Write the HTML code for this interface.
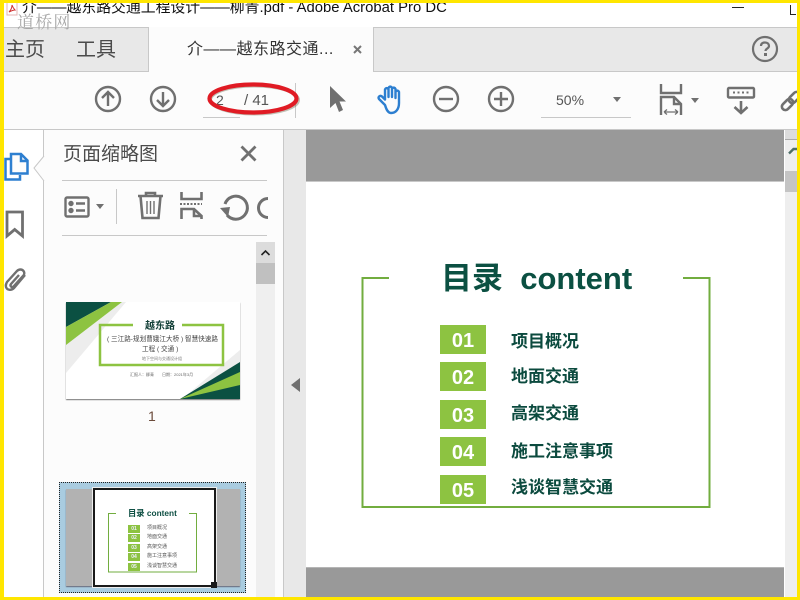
<!DOCTYPE html>
<html><head><meta charset="utf-8">
<style>
html,body{margin:0;padding:0;background:#fff}
#p{position:relative;width:800px;height:600px;overflow:hidden;background:#fff;font-family:"Liberation Sans","Noto Sans CJK SC",sans-serif}
#p div,#p span.a{position:absolute}
.t{white-space:nowrap;line-height:1}
.num{left:440px;width:46px;height:29px;background:#8dc341;color:#fff;font:bold 20px/32px "Liberation Sans",sans-serif;text-align:center}
.lbl{left:511px;color:#0b4a3e;font:bold 17px/20px "Liberation Sans","Noto Sans CJK SC",sans-serif;white-space:nowrap}
.sq{left:128px;width:12px;height:8px;background:#8dc341;color:#eef;font:bold 5px/8px "Liberation Sans",sans-serif;text-align:center}
svg{position:absolute;overflow:visible}
</style></head><body><div id="p">

<!-- title bar -->
<div style="left:0;top:27px;width:800px;height:1px;background:#c8c8c8"></div>
<div style="left:0;top:28px;width:800px;height:43px;background:#e8e8e8"></div>
<div style="left:0;top:71px;width:800px;height:1px;background:#c8c8c8"></div>
<div style="left:148px;top:27px;width:226px;height:45px;background:#fcfcfc;border-left:1px solid #c8c8c8;border-right:1px solid #c8c8c8;box-sizing:border-box"></div>
<div style="left:0;top:72px;width:800px;height:57px;background:#fcfcfc"></div>
<div style="left:0;top:129px;width:800px;height:1px;background:#c8c8c8"></div>

<svg style="left:6px;top:2px" width="12" height="14"><path d="M1 0V13H11V0" fill="#fff" stroke="#e3b4b4"/><path d="M3 10C5 8 6 5 6 3C7 6 8 7 9 8C7 8 5 9 3 10Z" fill="none" stroke="#d03030"/></svg>
<div class="t" style="left:22px;top:1px;font-size:14.850px;color:#111">介——越东路交通工程设计——柳青.pdf - Adobe Acrobat Pro DC</div>
<div class="t" style="left:17px;top:12px;font:17px/1 'Noto Serif CJK SC',serif;letter-spacing:1.200px;color:#a8a8a8">道桥网</div>
<div style="left:732px;top:7px;width:12px;height:1px;background:#222"></div>
<div style="left:790px;top:5px;width:1px;height:9px;background:#222"></div>
<div style="left:790px;top:14px;width:6px;height:1px;background:#222"></div>

<!-- tabs -->
<div class="t" style="left:5px;top:40px;font-size:20px;color:#4b4b4b">主页</div>
<div class="t" style="left:76px;top:40px;font-size:20px;color:#4b4b4b">工具</div>
<div class="t" style="left:187px;top:42px;font-size:16px;letter-spacing:.5px;color:#333">介——越东路交通...</div>
<svg style="left:352px;top:44px" width="11" height="11"><path d="M2 2L9 9M9 2L2 9" stroke="#777" stroke-width="2"/></svg>
<svg style="left:751px;top:35px" width="28" height="28"><circle cx="14" cy="14" r="12" fill="none" stroke="#707070" stroke-width="2.200"/><path d="M10 11C10 8 12 7.500 14 7.500C16.500 7.500 18 9 18 11C18 13.500 14.500 13.500 14.500 16" fill="none" stroke="#707070" stroke-width="2.200"/><rect x="13" y="18" width="3" height="3" fill="#707070"/></svg>

<!-- toolbar icons -->
<svg style="left:94px;top:85px" width="28" height="28" fill="none" stroke="#707070" stroke-width="2.400"><circle cx="14" cy="14" r="12"/><path d="M14 21V7M8 13L14 7L20 13"/></svg>
<svg style="left:149px;top:85px" width="28" height="28" fill="none" stroke="#707070" stroke-width="2.400"><circle cx="14" cy="14" r="12"/><path d="M14 7V21M8 15L14 21L20 15"/></svg>
<div class="t" style="left:216px;top:93px;font-size:14px;color:#555">2</div>
<div class="t" style="left:244px;top:93px;font-size:15px;color:#555">/ 41</div>
<div style="left:203px;top:117px;width:37px;height:1px;background:#c8c8c8"></div>
<div style="left:295px;top:83px;width:1px;height:35px;background:#c8c8c8"></div>
<svg style="left:205px;top:80px" width="100" height="36"><ellipse cx="49.500" cy="20" rx="44" ry="14" fill="none" stroke="#6a6a4a" stroke-width="3" opacity=".4"/><ellipse cx="48" cy="18.500" rx="43.500" ry="14" fill="none" stroke="#e01b24" stroke-width="4.200"/></svg>

<svg style="left:328px;top:85px" width="20" height="29"><path d="M2 1V23L7.500 18L11 27L15 25L11.500 16.500H18Z" fill="#707070"/></svg>
<svg style="left:376px;top:85px" width="30" height="30" fill="none" stroke="#2d7fd0" stroke-width="2.400" stroke-linejoin="round"><path d="M9 20L3 14C1.500 12 4 10 6 11.500L9 14.500V5C9 2.500 12.500 2.500 12.500 5V12V3.500C12.500 1 16 1 16 3.500V12V4.500C16 2 19.500 2 19.500 4.500V13V7.500C19.500 5 23 5 23 7.500V18C23 24 20 28 15 28C12 28 10.500 25 9 20Z"/></svg>
<svg style="left:432px;top:85px" width="28" height="28" fill="none" stroke="#707070" stroke-width="2.400"><circle cx="14" cy="14" r="12"/><path d="M7 14H21"/></svg>
<svg style="left:487px;top:85px" width="28" height="28" fill="none" stroke="#707070" stroke-width="2.400"><circle cx="14" cy="14" r="12"/><path d="M7 14H21M14 7V21"/></svg>
<div class="t" style="left:556px;top:93px;font-size:14px;color:#555">50%</div>
<div style="left:541px;top:117px;width:90px;height:1px;background:#c8c8c8"></div>
<svg style="left:612px;top:97px" width="10" height="6"><path d="M1 0H9L5 5Z" fill="#707070"/></svg>

<svg style="left:659px;top:84px" width="30" height="32" fill="none" stroke="#707070" stroke-width="2.400"><path d="M2 0V9H22V0"/><path d="M2 31V13H15L22 20V31"/><path d="M15 13V20H22"/><path d="M5 28H19M5 28L8 25.500M5 28L8 30.500M19 28L16 25.500M19 28L16 30.500" stroke-width="1.300"/></svg>
<svg style="left:690px;top:98px" width="10" height="6"><path d="M1 0H9L5 5Z" fill="#707070"/></svg>
<svg style="left:727px;top:87px" width="28" height="28" fill="none" stroke="#707070"><rect x="1" y="1" width="26" height="9.500" rx="1" stroke-width="2.400"/><path d="M6 5.500H8M10.500 5.500H12.500M15 5.500H17M19.500 5.500H21.500" stroke-width="2"/><path d="M14 14V26M7.500 20L14 26L20.500 20" stroke-width="2.600"/></svg>
<svg style="left:782px;top:90px" width="15" height="22" fill="none" stroke="#707070" stroke-width="2.600"><rect x="-1" y="11" width="13" height="7" rx="3.500" transform="rotate(-45 5.500 14.500)"/><rect x="6" y="4" width="13" height="7" rx="3.500" transform="rotate(-45 12.500 7.500)"/></svg>

<!-- left rail -->
<div style="left:43px;top:130px;width:1px;height:470px;background:#c8c8c8"></div>
<svg style="left:4px;top:152px" width="26" height="30" fill="none" stroke="#2d7fd0" stroke-width="2.500"><path d="M7 7H1.500V27.500H16V23"/><path d="M7 2H17L23.500 8.500V21.500H7Z" fill="#fcfcfc"/><path d="M17 2V9H23.500"/></svg>
<svg style="left:5px;top:210px" width="19" height="29" fill="none" stroke="#707070" stroke-width="2.800"><path d="M2 2H17.500V26L9.700 19.500L2 26Z"/></svg>
<svg style="left:4px;top:266px" width="24" height="28" fill="none" stroke="#707070" stroke-width="2.400"><path d="M21 9L10 22C7 25 3 24 2 21C1.500 19 2 18 3 16L13 5C15 3 18 3 19.500 5C21 7 20 9 19 10L9.500 20.500C8 22 5.500 20 7 18L15 9"/></svg>

<!-- panel -->
<div style="left:44px;top:130px;width:239px;height:470px;background:#fcfcfc"></div>
<svg style="left:33px;top:155px" width="11" height="28"><path d="M11 1L1 13L11 26" fill="#fcfcfc" stroke="#c8c8c8"/></svg>
<div style="left:283px;top:130px;width:1px;height:470px;background:#c8c8c8"></div>
<div class="t" style="left:63px;top:145px;font-size:19px;color:#4b4b4b">页面缩略图</div>
<svg style="left:240px;top:145px" width="17" height="17"><path d="M1.500 1.500L15.500 15.500M15.500 1.500L1.500 15.500" stroke="#707070" stroke-width="2.800"/></svg>
<div style="left:62px;top:180px;width:205px;height:1px;background:#c8c8c8"></div>
<div style="left:62px;top:235px;width:205px;height:1px;background:#c8c8c8"></div>
<div style="left:116px;top:189px;width:1px;height:35px;background:#c8c8c8"></div>
<svg style="left:64px;top:196px" width="26" height="22" fill="none" stroke="#707070" stroke-width="2.400"><rect x="1.500" y="1.500" width="23" height="19" rx="1.500"/><circle cx="7" cy="7.500" r="1.500" fill="#707070"/><circle cx="7" cy="14.500" r="1.500" fill="#707070"/><path d="M12 7.500H21M12 14.500H21"/></svg>
<svg style="left:95px;top:204px" width="10" height="6"><path d="M1 0H9L5 5Z" fill="#707070"/></svg>
<svg style="left:137px;top:191px" width="27" height="29" fill="none" stroke="#707070" stroke-width="2.600"><path d="M1 5H26M9 5V2H18V5M3.500 5L5.500 27H21.500L23.500 5"/><path d="M10 10V23M13.500 10V23M17 10V23" stroke-width="1.400"/></svg>
<svg style="left:180px;top:192px" width="23" height="28" fill="none" stroke="#707070" stroke-width="2.600"><path d="M1.500 0V7H21.500V0"/><path d="M0 12H22" stroke-dasharray="2 1.500" stroke-width="2"/><path d="M1.500 27V17H14L21.500 24V27"/><path d="M14 17V24H21"/></svg>
<svg style="left:220px;top:193px" width="28" height="28" fill="none" stroke="#707070" stroke-width="3"><path d="M7 22A11.500 11.500 0 1 0 5 11"/><path d="M0 15L8 24L10 14Z" fill="#707070" stroke="none"/></svg>
<svg style="left:262px;top:197px" width="6" height="22" fill="none" stroke="#707070" stroke-width="3"><path d="M6 1.500A9.500 9.500 0 0 0 6 20.500"/></svg>

<!-- thumb scrollbar -->
<div style="left:256px;top:242px;width:19px;height:358px;background:#efefef"></div>
<div style="left:256px;top:242px;width:19px;height:21px;background:#dcdcdc"></div>
<div style="left:256px;top:263px;width:19px;height:21px;background:#c0c0c0"></div>
<svg style="left:261px;top:250px" width="9" height="6"><path d="M.5 5L4.500 1L8.500 5" fill="none" stroke="#222" stroke-width="1.600"/></svg>

<!-- thumb 1 -->
<div style="left:66px;top:302px;width:174px;height:97px;background:#fff;box-shadow:0 1px 1px #777;overflow:hidden">
<svg style="left:0;top:0" width="174" height="97"><path d="M0 71L60 0H56L0 43Z" fill="#ededed"/><path d="M116 97L174 48V97Z" fill="#ededed"/><path d="M0 0H45L0 25Z" fill="#0b5042"/><path d="M0 25L45 0H56L0 43Z" fill="#8dc341"/><path d="M114 97L174 60V97Z" fill="#0b5042"/><path d="M114 97L174 70V83Z" fill="#8dc341"/><path d="M67 23H34V63H157V23H116" fill="none" stroke="#8dc341" stroke-width="2.500"/></svg>
<div class="t" style="left:79px;top:20px;font-size:10px;font-weight:bold;color:#123f37">越东路</div>
<div class="t" style="left:41px;top:35px;font-size:6.600px;color:#444">( 三江路-规划曹娥江大桥 ) 智慧快速路</div>
<div class="t" style="left:76px;top:45px;font-size:6.600px;color:#444">工程 ( 交通 )</div>
<div class="t" style="left:76px;top:55px;font-size:4px;color:#777">地下空间与交通设计组</div>
<div class="t" style="left:64px;top:71px;font-size:4px;color:#666">汇报人：柳青</div>
<div class="t" style="left:96px;top:71px;font-size:4px;color:#666">日期：2021年3月</div>
</div>
<div class="t" style="left:148px;top:409px;font-size:14px;color:#6b4a3a">1</div>

<!-- thumb 2 -->
<div style="left:59px;top:482px;width:187px;height:111px;box-sizing:border-box;border:1px dotted #222;background:#a9cce0"></div>
<div style="left:66px;top:489px;width:174px;height:97px;background:#b2b2b2;box-shadow:0 1px 1px #667"></div>
<div style="left:93px;top:488px;width:123px;height:99px;box-sizing:border-box;border:2.500px solid #1a1a1a;background:#fff;outline:1px solid #eee"></div>
<div style="left:211px;top:582px;width:6px;height:6px;background:#1a1a1a"></div>
<svg style="left:108px;top:513px" width="90" height="60"><path d="M8 .5H.5V59H88.500V.5H81" fill="none" stroke="#72ad3f" stroke-width="1"/></svg>
<div class="t" style="left:128px;top:509px;font-size:8.300px;font-weight:bold;color:#0e4f43">目录 content</div>
<div class="sq" style="top:525px">01</div>
<div class="sq" style="top:534px">02</div>
<div class="sq" style="top:544px">03</div>
<div class="sq" style="top:553px">04</div>
<div class="sq" style="top:563px">05</div>
<div class="t" style="left:147px;top:526px;font-size:5px;color:#555">项目概况</div>
<div class="t" style="left:147px;top:535px;font-size:5px;color:#555">地面交通</div>
<div class="t" style="left:147px;top:545px;font-size:5px;color:#555">高架交通</div>
<div class="t" style="left:147px;top:554px;font-size:5px;color:#555">施工注意事项</div>
<div class="t" style="left:147px;top:564px;font-size:5px;color:#555">浅谈智慧交通</div>

<!-- gutter + document -->
<div style="left:284px;top:130px;width:22px;height:470px;background:#e8e8e8"></div>
<svg style="left:291px;top:378px" width="9" height="14"><path d="M9 0V14L0 7Z" fill="#707070"/></svg>
<div style="left:306px;top:130px;width:478px;height:51px;background:#999"></div>
<div style="left:306px;top:181px;width:478px;height:1px;background:#c8c8c8"></div>
<div style="left:306px;top:182px;width:478px;height:385px;background:#fff"></div>
<div style="left:306px;top:567px;width:478px;height:1px;background:#b5b5b5"></div>
<div style="left:306px;top:568px;width:478px;height:29px;background:#999"></div>

<!-- document content -->
<svg style="left:361px;top:277px" width="350" height="231"><path d="M28 1H1.500V230H348.500V1H322" fill="none" stroke="#72ad3f" stroke-width="2"/></svg>
<div class="t" style="left:441px;top:263px;font-size:31px;font-weight:bold;color:#0b5042;white-space:pre">目录  content</div>
<div class="num" style="top:325px">01</div>
<div class="num" style="top:362px">02</div>
<div class="num" style="top:400px">03</div>
<div class="num" style="top:437px">04</div>
<div class="num" style="top:475px">05</div>
<div class="lbl" style="top:332px">项目概况</div>
<div class="lbl" style="top:367px">地面交通</div>
<div class="lbl" style="top:404px">高架交通</div>
<div class="lbl" style="top:442px">施工注意事项</div>
<div class="lbl" style="top:478px">浅谈智慧交通</div>

<!-- right scrollbar -->
<div style="left:785px;top:130px;width:12px;height:467px;background:#eee"></div>
<div style="left:785px;top:130px;width:12px;height:9px;background:#dcdcdc"></div>
<div style="left:785px;top:139px;width:12px;height:1px;background:#aaa"></div>
<svg style="left:789px;top:147px" width="8" height="8"><path d="M0 6.500L4.500 2H8" fill="none" stroke="#4f6f68" stroke-width="2.400"/></svg>
<div style="left:785px;top:171px;width:12px;height:21px;background:#c4c4c4"></div>

<!-- yellow frame -->
<div style="left:0;top:0;width:800px;height:3px;background:#ffe600"></div>
<div style="left:0;top:597px;width:800px;height:3px;background:#ffe600"></div>
<div style="left:0;top:0;width:4px;height:600px;background:#ffe600"></div>
<div style="left:797px;top:0;width:3px;height:600px;background:#ffe600"></div>
</div></body></html>
